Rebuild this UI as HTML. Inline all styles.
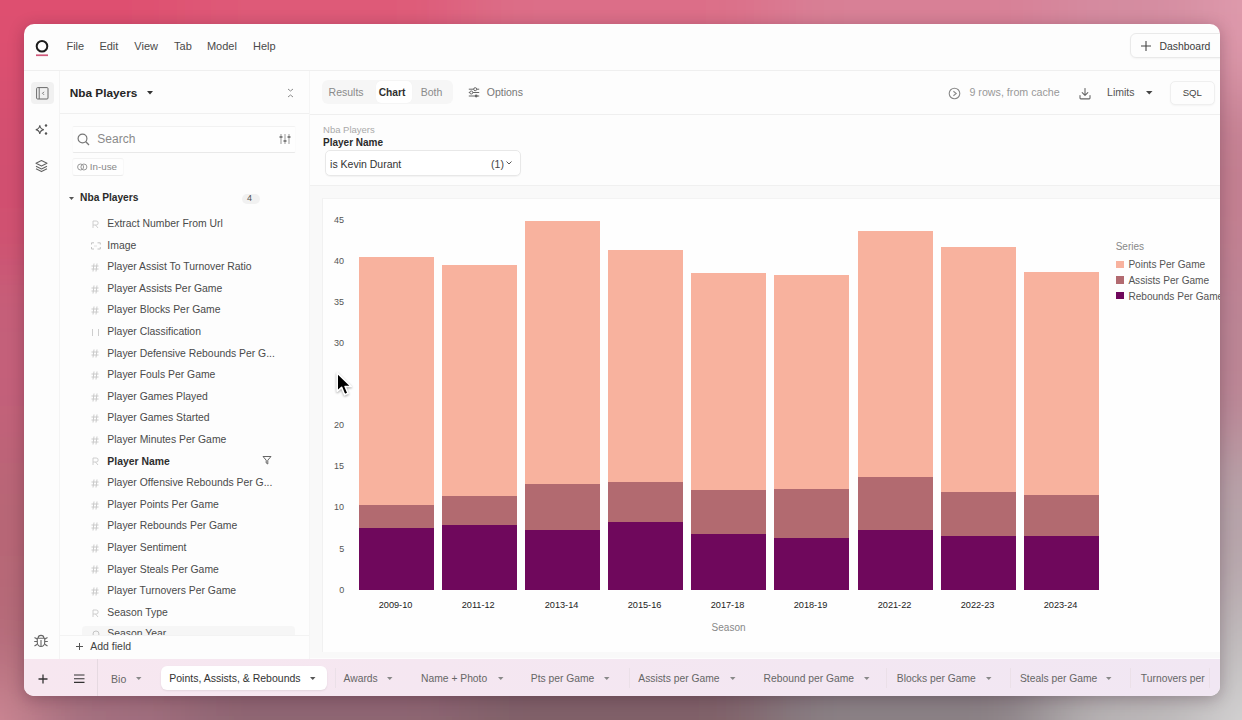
<!DOCTYPE html>
<html><head><meta charset="utf-8">
<style>
*{box-sizing:border-box;margin:0;padding:0}
html,body{width:1242px;height:720px;overflow:hidden}
body{font-family:"Liberation Sans",sans-serif;position:relative;
background:#c87080;}
.a{position:absolute}
.shadow{position:absolute;left:24px;top:24px;width:1196px;height:672px;border-radius:10px;box-shadow:0 3px 16px rgba(40,10,30,.28)}
.win{position:absolute;left:0;top:0;width:1242px;height:720px;clip-path:inset(24px 22px 24px 24px round 10px);background:#fdfdfd}
.t{position:absolute;white-space:nowrap;line-height:1}
</style></head><body>
<svg class="a" style="left:0;top:0" width="1242" height="720"><defs><filter id="bl" x="-600" y="-600" width="2442" height="1920" filterUnits="userSpaceOnUse"><feGaussianBlur stdDeviation="40"/></filter></defs><g filter="url(#bl)"><rect x="-600" y="-600" width="630.0" height="690.0" fill="#de5070"/><rect x="30.0" y="-600" width="155.0" height="690.0" fill="#de5070"/><rect x="185.0" y="-600" width="280.0" height="690.0" fill="#de5a78"/><rect x="465.0" y="-600" width="310.0" height="690.0" fill="#dc6e88"/><rect x="775.0" y="-600" width="280.0" height="690.0" fill="#d88096"/><rect x="1055.0" y="-600" width="156.0" height="690.0" fill="#d48ca0"/><rect x="1211.0" y="-600" width="631.0" height="690.0" fill="#e09cae"/><rect x="-600" y="90.0" width="630.0" height="180.0" fill="#d24f70"/><rect x="30.0" y="90.0" width="155.0" height="180.0" fill="#d05070"/><rect x="185.0" y="90.0" width="280.0" height="180.0" fill="#d06080"/><rect x="465.0" y="90.0" width="310.0" height="180.0" fill="#cc7088"/><rect x="775.0" y="90.0" width="280.0" height="180.0" fill="#c88090"/><rect x="1055.0" y="90.0" width="156.0" height="180.0" fill="#bd7a8c"/><rect x="1211.0" y="90.0" width="631.0" height="180.0" fill="#c48092"/><rect x="-600" y="270.0" width="630.0" height="180.0" fill="#c4607a"/><rect x="30.0" y="270.0" width="155.0" height="180.0" fill="#c2607a"/><rect x="185.0" y="270.0" width="280.0" height="180.0" fill="#bc6a80"/><rect x="465.0" y="270.0" width="310.0" height="180.0" fill="#b87080"/><rect x="775.0" y="270.0" width="280.0" height="180.0" fill="#b88090"/><rect x="1055.0" y="270.0" width="156.0" height="180.0" fill="#b68090"/><rect x="1211.0" y="270.0" width="631.0" height="180.0" fill="#bc8696"/><rect x="-600" y="450.0" width="630.0" height="150.0" fill="#b86676"/><rect x="30.0" y="450.0" width="155.0" height="150.0" fill="#b46676"/><rect x="185.0" y="450.0" width="280.0" height="150.0" fill="#a46878"/><rect x="465.0" y="450.0" width="310.0" height="150.0" fill="#986870"/><rect x="775.0" y="450.0" width="280.0" height="150.0" fill="#a08088"/><rect x="1055.0" y="450.0" width="156.0" height="150.0" fill="#b09ca4"/><rect x="1211.0" y="450.0" width="631.0" height="150.0" fill="#b8a6ab"/><rect x="-600" y="600.0" width="630.0" height="90.0" fill="#b86c7a"/><rect x="30.0" y="600.0" width="155.0" height="90.0" fill="#a66a78"/><rect x="185.0" y="600.0" width="280.0" height="90.0" fill="#946474"/><rect x="465.0" y="600.0" width="310.0" height="90.0" fill="#80606a"/><rect x="775.0" y="600.0" width="280.0" height="90.0" fill="#8a8086"/><rect x="1055.0" y="600.0" width="156.0" height="90.0" fill="#b0aaac"/><rect x="1211.0" y="600.0" width="631.0" height="90.0" fill="#c4c0c1"/><rect x="-600" y="690.0" width="630.0" height="630.0" fill="#d8909c"/><rect x="30.0" y="690.0" width="155.0" height="630.0" fill="#a07080"/><rect x="185.0" y="690.0" width="280.0" height="630.0" fill="#8c6672"/><rect x="465.0" y="690.0" width="310.0" height="630.0" fill="#806068"/><rect x="775.0" y="690.0" width="280.0" height="630.0" fill="#8a8084"/><rect x="1055.0" y="690.0" width="156.0" height="630.0" fill="#bcb8b9"/><rect x="1211.0" y="690.0" width="631.0" height="630.0" fill="#dcdcdc"/></g></svg><div class="shadow"></div>
<div class="win">
<svg class="a" style="left:34px;top:38px;" width="16" height="20" viewBox="0 0 16 20"><circle cx="8" cy="8.2" r="5.3" fill="none" stroke="#1c1c1c" stroke-width="2"/><rect x="2" y="16.4" width="12" height="1.7" fill="#d0587a"/></svg>
<div class="t" style="left:66.41px;top:40.89px;font-size:11px;color:#4a4a4a;font-weight:400;">File</div>
<div class="t" style="left:99.41px;top:40.89px;font-size:11px;color:#4a4a4a;font-weight:400;">Edit</div>
<div class="t" style="left:134.31px;top:40.89px;font-size:11px;color:#4a4a4a;font-weight:400;">View</div>
<div class="t" style="left:174.11px;top:40.89px;font-size:11px;color:#4a4a4a;font-weight:400;">Tab</div>
<div class="t" style="left:206.91px;top:40.89px;font-size:11px;color:#4a4a4a;font-weight:400;">Model</div>
<div class="t" style="left:253.01px;top:40.89px;font-size:11px;color:#4a4a4a;font-weight:400;">Help</div>
<div class="a" style="left:1130px;top:33px;width:100px;height:25px;border:1px solid #e9e9e9;border-radius:6px;background:#fdfdfd;box-shadow:0 1px 2px rgba(0,0,0,.04)"></div>
<svg class="a" style="left:1141px;top:40.5px;" width="10" height="10" viewBox="0 0 10 10"><path d="M5 0v10M0 5h10" stroke="#444" stroke-width="1.1"/></svg>
<div class="t" style="left:1159.56px;top:41.50px;font-size:10.4px;color:#3c3c3c;font-weight:400;">Dashboard</div>
<div class="a" style="left:24px;top:70px;width:1196px;height:1px;background:#efefef"></div>
<div class="a" style="left:59px;top:71px;width:1px;height:589px;background:#f4f4f4"></div>
<div class="a" style="left:31px;top:82px;width:22.5px;height:21.5px;background:#f1f1f1;border-radius:4px"></div>
<svg class="a" style="left:35.5px;top:86.5px;" width="13" height="13" viewBox="0 0 13 13"><rect x="0.6" y="0.6" width="11.4" height="11.4" rx="1" fill="none" stroke="#6a6a6a" stroke-width="1"/><path d="M3.2 0.6v11.4" stroke="#6a6a6a" stroke-width="1"/><path d="M8 4.8l-1.5 1.5 1.5 1.5" fill="none" stroke="#6a6a6a" stroke-width="0.9"/></svg>
<svg class="a" style="left:34px;top:122px;" width="16" height="16" viewBox="0 0 16 16"><path d="M5.8 3.2 Q6.3 7.1 9.8 7.6 Q6.3 8.1 5.8 12 Q5.3 8.1 1.8 7.6 Q5.3 7.1 5.8 3.2Z" fill="none" stroke="#555" stroke-width="1.1"/><circle cx="12" cy="3.5" r="1.2" fill="#555"/><circle cx="12" cy="11.5" r="1.2" fill="#555"/></svg>
<svg class="a" style="left:34.5px;top:159px;" width="14" height="14" viewBox="0 0 14 14"><path d="M6.5 1.5 L12 4.3 L6.5 7.1 L1 4.3Z" fill="none" stroke="#666" stroke-width="1.1" stroke-linejoin="round"/><path d="M1 7.2 L6.5 10 L12 7.2" fill="none" stroke="#666" stroke-width="1.1" stroke-linejoin="round"/><path d="M1 9.8 L6.5 12.6 L12 9.8" fill="none" stroke="#666" stroke-width="1.1" stroke-linejoin="round"/></svg>
<svg class="a" style="left:33px;top:633px;" width="16" height="16" viewBox="0 0 16 16"><path d="M5.2 5 a2.8 2.6 0 0 1 5.6 0" fill="none" stroke="#666" stroke-width="1.1"/><path d="M4.3 5.3h7.4v4.2a3.7 4 0 0 1-7.4 0Z" fill="none" stroke="#666" stroke-width="1.1"/><path d="M8 7v6M1.5 4.5l2.6 1.5M14.5 4.5l-2.6 1.5M1.2 8.5h3M14.8 8.5h-3M1.5 13l2.7-1.8M14.5 13l-2.7-1.8" fill="none" stroke="#666" stroke-width="1.1"/></svg>
<div class="t" style="left:69.74px;top:87.91px;font-size:11.8px;color:#242424;font-weight:700;">Nba Players</div>
<svg class="a" style="left:147px;top:91px;" width="6" height="4" viewBox="0 0 6 4"><path d="M0 0h6L3 3.5Z" fill="#333"/></svg>
<svg class="a" style="left:287px;top:87.5px;" width="7" height="10" viewBox="0 0 7 10"><path d="M1 1 L3.5 3 L6 1" fill="none" stroke="#8a8a8a" stroke-width="1"/><path d="M1 9 L3.5 7 L6 9" fill="none" stroke="#8a8a8a" stroke-width="1"/></svg>
<div class="a" style="left:60px;top:113px;width:250px;height:1px;background:#f0f0f0"></div>
<div class="a" style="left:71.5px;top:125.5px;width:224.5px;height:27px;border:1px solid #fbfbfb;border-top-color:#f2f2f2;border-bottom-color:#e9e9e9;border-radius:2px;background:#fefefe"></div>
<svg class="a" style="left:77px;top:133px;" width="14" height="13" viewBox="0 0 14 13"><circle cx="5.5" cy="5.5" r="4.4" fill="none" stroke="#777" stroke-width="1.2"/><path d="M8.8 8.8 L12 12" stroke="#777" stroke-width="1.3"/></svg>
<div class="t" style="left:97.32px;top:133.44px;font-size:12px;color:#8a8a8a;font-weight:400;">Search</div>
<svg class="a" style="left:279px;top:134px;" width="12" height="10" viewBox="0 0 12 10"><path d="M2 0v10M6 0v10M10 0v10" stroke="#999" stroke-width="1"/><path d="M0.5 3h3M4.5 7h3M8.5 3h3" stroke="#666" stroke-width="1.6"/></svg>
<div class="a" style="left:71.5px;top:157.7px;width:52.5px;height:18.7px;border:1px solid #f8f8f8;border-top-color:#f2f2f2;border-bottom-color:#ececec;border-radius:3px;background:#fefefe"></div>
<svg class="a" style="left:77px;top:163px;" width="11" height="8" viewBox="0 0 11 8"><ellipse cx="3.6" cy="4" rx="3" ry="3" fill="none" stroke="#999" stroke-width="1"/><ellipse cx="6.9" cy="4" rx="3" ry="3" fill="none" stroke="#999" stroke-width="1"/></svg>
<div class="t" style="left:89.82px;top:162.30px;font-size:9.8px;color:#888;font-weight:400;">In-use</div>
<svg class="a" style="left:69px;top:197px;" width="6" height="4" viewBox="0 0 6 4"><path d="M0 0h5L2.5 3Z" fill="#555"/></svg>
<div class="t" style="left:80.08px;top:193.47px;font-size:10.2px;color:#2a2a2a;font-weight:700;">Nba Players</div>
<div class="a" style="left:241.5px;top:193.8px;width:18px;height:10px;background:#f1f1f1;border-radius:5px"></div>
<div class="t" style="left:246.99px;top:194.48px;font-size:9px;color:#505050;font-weight:400;">4</div>
<div class="a" style="left:82px;top:626px;width:212.5px;height:12px;background:#f6f6f6;border-radius:4px"></div>
<svg class="a" style="left:92px;top:219.7px;" width="7" height="8.5" viewBox="0 0 7 8.5"><path d="M1 8V1h3.2a2 2 0 010 4H1M3.5 5L6 8" stroke="#c8c8c8" stroke-width="0.9" fill="none"/></svg>
<div class="t" style="left:107.36px;top:218.90px;font-size:10.4px;color:#4a4a4a;font-weight:400;">Extract Number From Url</div>
<svg class="a" style="left:90.5px;top:241.79999999999998px;" width="10" height="8" viewBox="0 0 10 8"><path d="M0.5 2.5V0.8h2.5M6.5 0.8h2.8v1.7M0.5 5v2h2.5M6.5 7h2.8V5" stroke="#c4c4c4" stroke-width="1" fill="none"/><path d="M3 4h3" stroke="#d8d8d8" stroke-width="0.8"/></svg>
<div class="t" style="left:107.36px;top:240.50px;font-size:10.4px;color:#4a4a4a;font-weight:400;">Image</div>
<svg class="a" style="left:91px;top:262.9px;" width="8" height="9" viewBox="0 0 8 9"><path d="M3 0.5 L2 8.5M6 0.5 L5 8.5M0.5 3h7M0.5 6h7" stroke="#c6c6c6" stroke-width="0.9" fill="none"/></svg>
<div class="t" style="left:107.36px;top:262.10px;font-size:10.4px;color:#4a4a4a;font-weight:400;">Player Assist To Turnover Ratio</div>
<svg class="a" style="left:91px;top:284.5px;" width="8" height="9" viewBox="0 0 8 9"><path d="M3 0.5 L2 8.5M6 0.5 L5 8.5M0.5 3h7M0.5 6h7" stroke="#c6c6c6" stroke-width="0.9" fill="none"/></svg>
<div class="t" style="left:107.36px;top:283.70px;font-size:10.4px;color:#4a4a4a;font-weight:400;">Player Assists Per Game</div>
<svg class="a" style="left:91px;top:306.1px;" width="8" height="9" viewBox="0 0 8 9"><path d="M3 0.5 L2 8.5M6 0.5 L5 8.5M0.5 3h7M0.5 6h7" stroke="#c6c6c6" stroke-width="0.9" fill="none"/></svg>
<div class="t" style="left:107.36px;top:305.30px;font-size:10.4px;color:#4a4a4a;font-weight:400;">Player Blocks Per Game</div>
<svg class="a" style="left:91px;top:327.7px;" width="9" height="8" viewBox="0 0 9 8"><path d="M1.5 1v7M7.5 1v7" stroke="#c8c8c8" stroke-width="0.9" fill="none"/></svg>
<div class="t" style="left:107.36px;top:326.90px;font-size:10.4px;color:#4a4a4a;font-weight:400;">Player Classification</div>
<svg class="a" style="left:91px;top:349.3px;" width="8" height="9" viewBox="0 0 8 9"><path d="M3 0.5 L2 8.5M6 0.5 L5 8.5M0.5 3h7M0.5 6h7" stroke="#c6c6c6" stroke-width="0.9" fill="none"/></svg>
<div class="t" style="left:107.36px;top:348.50px;font-size:10.4px;color:#4a4a4a;font-weight:400;">Player Defensive Rebounds Per G...</div>
<svg class="a" style="left:91px;top:370.9px;" width="8" height="9" viewBox="0 0 8 9"><path d="M3 0.5 L2 8.5M6 0.5 L5 8.5M0.5 3h7M0.5 6h7" stroke="#c6c6c6" stroke-width="0.9" fill="none"/></svg>
<div class="t" style="left:107.36px;top:370.10px;font-size:10.4px;color:#4a4a4a;font-weight:400;">Player Fouls Per Game</div>
<svg class="a" style="left:91px;top:392.5px;" width="8" height="9" viewBox="0 0 8 9"><path d="M3 0.5 L2 8.5M6 0.5 L5 8.5M0.5 3h7M0.5 6h7" stroke="#c6c6c6" stroke-width="0.9" fill="none"/></svg>
<div class="t" style="left:107.36px;top:391.70px;font-size:10.4px;color:#4a4a4a;font-weight:400;">Player Games Played</div>
<svg class="a" style="left:91px;top:414.1px;" width="8" height="9" viewBox="0 0 8 9"><path d="M3 0.5 L2 8.5M6 0.5 L5 8.5M0.5 3h7M0.5 6h7" stroke="#c6c6c6" stroke-width="0.9" fill="none"/></svg>
<div class="t" style="left:107.36px;top:413.30px;font-size:10.4px;color:#4a4a4a;font-weight:400;">Player Games Started</div>
<svg class="a" style="left:91px;top:435.7px;" width="8" height="9" viewBox="0 0 8 9"><path d="M3 0.5 L2 8.5M6 0.5 L5 8.5M0.5 3h7M0.5 6h7" stroke="#c6c6c6" stroke-width="0.9" fill="none"/></svg>
<div class="t" style="left:107.36px;top:434.90px;font-size:10.4px;color:#4a4a4a;font-weight:400;">Player Minutes Per Game</div>
<svg class="a" style="left:92px;top:457.3px;" width="7" height="8.5" viewBox="0 0 7 8.5"><path d="M1 8V1h3.2a2 2 0 010 4H1M3.5 5L6 8" stroke="#c8c8c8" stroke-width="0.9" fill="none"/></svg>
<div class="t" style="left:107.36px;top:456.50px;font-size:10.4px;color:#2e2e2e;font-weight:700;">Player Name</div>
<svg class="a" style="left:91px;top:478.90000000000003px;" width="8" height="9" viewBox="0 0 8 9"><path d="M3 0.5 L2 8.5M6 0.5 L5 8.5M0.5 3h7M0.5 6h7" stroke="#c6c6c6" stroke-width="0.9" fill="none"/></svg>
<div class="t" style="left:107.36px;top:478.10px;font-size:10.4px;color:#4a4a4a;font-weight:400;">Player Offensive Rebounds Per G...</div>
<svg class="a" style="left:91px;top:500.5px;" width="8" height="9" viewBox="0 0 8 9"><path d="M3 0.5 L2 8.5M6 0.5 L5 8.5M0.5 3h7M0.5 6h7" stroke="#c6c6c6" stroke-width="0.9" fill="none"/></svg>
<div class="t" style="left:107.36px;top:499.70px;font-size:10.4px;color:#4a4a4a;font-weight:400;">Player Points Per Game</div>
<svg class="a" style="left:91px;top:522.1px;" width="8" height="9" viewBox="0 0 8 9"><path d="M3 0.5 L2 8.5M6 0.5 L5 8.5M0.5 3h7M0.5 6h7" stroke="#c6c6c6" stroke-width="0.9" fill="none"/></svg>
<div class="t" style="left:107.36px;top:521.30px;font-size:10.4px;color:#4a4a4a;font-weight:400;">Player Rebounds Per Game</div>
<svg class="a" style="left:91px;top:543.7px;" width="8" height="9" viewBox="0 0 8 9"><path d="M3 0.5 L2 8.5M6 0.5 L5 8.5M0.5 3h7M0.5 6h7" stroke="#c6c6c6" stroke-width="0.9" fill="none"/></svg>
<div class="t" style="left:107.36px;top:542.90px;font-size:10.4px;color:#4a4a4a;font-weight:400;">Player Sentiment</div>
<svg class="a" style="left:91px;top:565.3px;" width="8" height="9" viewBox="0 0 8 9"><path d="M3 0.5 L2 8.5M6 0.5 L5 8.5M0.5 3h7M0.5 6h7" stroke="#c6c6c6" stroke-width="0.9" fill="none"/></svg>
<div class="t" style="left:107.36px;top:564.50px;font-size:10.4px;color:#4a4a4a;font-weight:400;">Player Steals Per Game</div>
<svg class="a" style="left:91px;top:586.9000000000001px;" width="8" height="9" viewBox="0 0 8 9"><path d="M3 0.5 L2 8.5M6 0.5 L5 8.5M0.5 3h7M0.5 6h7" stroke="#c6c6c6" stroke-width="0.9" fill="none"/></svg>
<div class="t" style="left:107.36px;top:586.10px;font-size:10.4px;color:#4a4a4a;font-weight:400;">Player Turnovers Per Game</div>
<svg class="a" style="left:92px;top:608.5px;" width="7" height="8.5" viewBox="0 0 7 8.5"><path d="M1 8V1h3.2a2 2 0 010 4H1M3.5 5L6 8" stroke="#c8c8c8" stroke-width="0.9" fill="none"/></svg>
<div class="t" style="left:107.36px;top:607.70px;font-size:10.4px;color:#4a4a4a;font-weight:400;">Season Type</div>
<svg class="a" style="left:92px;top:630.1px;" width="8" height="8" viewBox="0 0 8 8"><circle cx="4" cy="4" r="3" stroke="#c0c0c0" stroke-width="0.9" fill="none"/></svg>
<div class="t" style="left:107.36px;top:629.30px;font-size:10.4px;color:#4a4a4a;font-weight:400;">Season Year</div>
<svg class="a" style="left:262px;top:455px;" width="10" height="10" viewBox="0 0 10 10"><path d="M1 1.5h8L5.8 5.2V9L4.2 8V5.2Z" fill="none" stroke="#666" stroke-width="1"/></svg>
<div class="a" style="left:60px;top:635px;width:250px;height:24px;background:#fdfdfd;border-top:1px solid #f3f3f3"></div>
<svg class="a" style="left:75.5px;top:643px;" width="7" height="7" viewBox="0 0 7 7"><path d="M3.5 0v7M0 3.5h7" stroke="#555" stroke-width="1"/></svg>
<div class="t" style="left:90.26px;top:641.41px;font-size:10.5px;color:#444;font-weight:400;">Add field</div>
<div class="a" style="left:309px;top:71px;width:1px;height:588px;background:#f5f5f5"></div>
<div class="a" style="left:322px;top:80.4px;width:131px;height:24px;background:#f6f6f6;border-radius:6px"></div>
<div class="a" style="left:376px;top:81.3px;width:35.5px;height:22.2px;background:#fff;border-radius:5px;box-shadow:0 0 1px rgba(0,0,0,.05)"></div>
<div class="t" style="left:328.56px;top:87.11px;font-size:10.5px;color:#8a8a8a;font-weight:400;">Results</div>
<div class="t" style="left:378.78px;top:87.97px;font-size:10.2px;color:#2e2e2e;font-weight:700;">Chart</div>
<div class="t" style="left:420.66px;top:87.11px;font-size:10.5px;color:#8a8a8a;font-weight:400;">Both</div>
<svg class="a" style="left:468px;top:87px;" width="12" height="11" viewBox="0 0 12 11"><path d="M0.8 2.2h10.4M0.8 5.5h10.4M0.8 9h10.4" stroke="#666" stroke-width="1"/><circle cx="7.2" cy="2.2" r="1.5" fill="#fff" stroke="#666" stroke-width="1"/><circle cx="3.3" cy="5.5" r="1.5" fill="#fff" stroke="#666" stroke-width="1"/><circle cx="8.2" cy="9" r="1.4" fill="#666"/></svg>
<div class="t" style="left:486.75px;top:87.11px;font-size:10.5px;color:#777;font-weight:400;">Options</div>
<svg class="a" style="left:947.5px;top:87px;" width="13" height="13" viewBox="0 0 13 13"><circle cx="6.5" cy="6.5" r="5.3" fill="none" stroke="#8a8a8a" stroke-width="1.1"/><path d="M5.4 4.3 L8.2 6.5 L5.4 8.7" fill="none" stroke="#8a8a8a" stroke-width="1.1"/></svg>
<div class="t" style="left:969.44px;top:86.74px;font-size:10.7px;color:#999;font-weight:400;">9 rows, from cache</div>
<svg class="a" style="left:1078.5px;top:87.5px;" width="12" height="12" viewBox="0 0 12 12"><path d="M6 0.5v6.8M3.2 4.6 L6 7.4 L8.8 4.6M1 7.5v2.6a0.8 0.8 0 0 0 0.8 0.8h8.4a0.8 0.8 0 0 0 0.8-0.8V7.5" fill="none" stroke="#666" stroke-width="1.1" stroke-linecap="round" stroke-linejoin="round"/></svg>
<div class="t" style="left:1107.06px;top:86.91px;font-size:10.5px;color:#555;font-weight:400;">Limits</div>
<svg class="a" style="left:1146px;top:91px;" width="7" height="4" viewBox="0 0 7 4"><path d="M0 0h6.5L3.25 3.5Z" fill="#444"/></svg>
<div class="a" style="left:1169.5px;top:80.5px;width:45px;height:24.8px;border:1px solid #efefef;border-radius:5px;background:#fdfdfd;box-shadow:0 1px 2px rgba(0,0,0,.04)"></div>
<div class="t" style="left:1182.64px;top:87.87px;font-size:9.6px;color:#444;font-weight:400;">SQL</div>
<div class="a" style="left:310px;top:113.5px;width:910px;height:1px;background:#efefef"></div>
<div class="t" style="left:323.04px;top:124.96px;font-size:9.5px;color:#aaa;font-weight:400;">Nba Players</div>
<div class="t" style="left:323.00px;top:137.73px;font-size:10px;color:#2a2a2a;font-weight:700;">Player Name</div>
<div class="a" style="left:324.7px;top:150.4px;width:196px;height:26px;border:1px solid #e8e8e8;border-radius:5px;background:#fff;box-shadow:0 1px 1px rgba(0,0,0,.04)"></div>
<div class="t" style="left:330.06px;top:158.91px;font-size:10.5px;color:#333;font-weight:400;">is Kevin Durant</div>
<div class="t" style="left:491.06px;top:158.91px;font-size:10.5px;color:#444;font-weight:400;">(1)</div>
<svg class="a" style="left:506px;top:161px;" width="6" height="4" viewBox="0 0 6 4"><path d="M0.5 0.5 L3 3 L5.5 0.5" fill="none" stroke="#555" stroke-width="1"/></svg>
<div class="a" style="left:310px;top:185px;width:910px;height:473px;background:#f9f9f9;border-top:1px solid #f0f0f0"></div>
<div class="a" style="left:322px;top:198px;width:898px;height:454px;background:#fefefe;border-left:1px solid #f1f1f1;border-top:1px solid #f3f3f3"></div>
<div class="t" style="left:339.19px;top:585.68px;font-size:9px;color:#555;font-weight:400;">0</div>
<div class="t" style="left:339.19px;top:544.58px;font-size:9px;color:#555;font-weight:400;">5</div>
<div class="t" style="left:333.99px;top:503.48px;font-size:9px;color:#555;font-weight:400;">10</div>
<div class="t" style="left:333.99px;top:462.38px;font-size:9px;color:#555;font-weight:400;">15</div>
<div class="t" style="left:333.99px;top:421.28px;font-size:9px;color:#555;font-weight:400;">20</div>
<div class="t" style="left:333.99px;top:339.08px;font-size:9px;color:#555;font-weight:400;">30</div>
<div class="t" style="left:333.99px;top:297.98px;font-size:9px;color:#555;font-weight:400;">35</div>
<div class="t" style="left:333.99px;top:256.88px;font-size:9px;color:#555;font-weight:400;">40</div>
<div class="t" style="left:333.99px;top:215.78px;font-size:9px;color:#555;font-weight:400;">45</div>
<div class="a" style="left:359px;top:257px;width:75px;height:333px;background:#f8b29e"></div>
<div class="a" style="left:359px;top:505px;width:75px;height:85px;background:#b26a70"></div>
<div class="a" style="left:359px;top:528px;width:75px;height:62px;background:#6f085c"></div>
<div class="t" style="left:378.67px;top:600.71px;font-size:9.2px;color:#222;font-weight:400;">2009-10</div>
<div class="a" style="left:442px;top:265px;width:75px;height:325px;background:#f8b29e"></div>
<div class="a" style="left:442px;top:496px;width:75px;height:94px;background:#b26a70"></div>
<div class="a" style="left:442px;top:525px;width:75px;height:65px;background:#6f085c"></div>
<div class="t" style="left:461.67px;top:600.71px;font-size:9.2px;color:#222;font-weight:400;">2011-12</div>
<div class="a" style="left:525px;top:221px;width:75px;height:369px;background:#f8b29e"></div>
<div class="a" style="left:525px;top:484px;width:75px;height:106px;background:#b26a70"></div>
<div class="a" style="left:525px;top:530px;width:75px;height:60px;background:#6f085c"></div>
<div class="t" style="left:544.67px;top:600.71px;font-size:9.2px;color:#222;font-weight:400;">2013-14</div>
<div class="a" style="left:608px;top:250px;width:75px;height:340px;background:#f8b29e"></div>
<div class="a" style="left:608px;top:482px;width:75px;height:108px;background:#b26a70"></div>
<div class="a" style="left:608px;top:522px;width:75px;height:68px;background:#6f085c"></div>
<div class="t" style="left:627.67px;top:600.71px;font-size:9.2px;color:#222;font-weight:400;">2015-16</div>
<div class="a" style="left:691px;top:273px;width:75px;height:317px;background:#f8b29e"></div>
<div class="a" style="left:691px;top:490px;width:75px;height:100px;background:#b26a70"></div>
<div class="a" style="left:691px;top:534px;width:75px;height:56px;background:#6f085c"></div>
<div class="t" style="left:710.67px;top:600.71px;font-size:9.2px;color:#222;font-weight:400;">2017-18</div>
<div class="a" style="left:774px;top:275px;width:75px;height:315px;background:#f8b29e"></div>
<div class="a" style="left:774px;top:489px;width:75px;height:101px;background:#b26a70"></div>
<div class="a" style="left:774px;top:538px;width:75px;height:52px;background:#6f085c"></div>
<div class="t" style="left:793.67px;top:600.71px;font-size:9.2px;color:#222;font-weight:400;">2018-19</div>
<div class="a" style="left:858px;top:231px;width:75px;height:359px;background:#f8b29e"></div>
<div class="a" style="left:858px;top:477px;width:75px;height:113px;background:#b26a70"></div>
<div class="a" style="left:858px;top:530px;width:75px;height:60px;background:#6f085c"></div>
<div class="t" style="left:877.67px;top:600.71px;font-size:9.2px;color:#222;font-weight:400;">2021-22</div>
<div class="a" style="left:941px;top:247px;width:75px;height:343px;background:#f8b29e"></div>
<div class="a" style="left:941px;top:492px;width:75px;height:98px;background:#b26a70"></div>
<div class="a" style="left:941px;top:536px;width:75px;height:54px;background:#6f085c"></div>
<div class="t" style="left:960.67px;top:600.71px;font-size:9.2px;color:#222;font-weight:400;">2022-23</div>
<div class="a" style="left:1024px;top:272px;width:75px;height:318px;background:#f8b29e"></div>
<div class="a" style="left:1024px;top:495px;width:75px;height:95px;background:#b26a70"></div>
<div class="a" style="left:1024px;top:536px;width:75px;height:54px;background:#6f085c"></div>
<div class="t" style="left:1043.67px;top:600.71px;font-size:9.2px;color:#222;font-weight:400;">2023-24</div>
<div class="t" style="left:711.60px;top:622.83px;font-size:10px;color:#888;font-weight:400;">Season</div>
<div class="t" style="left:1115.70px;top:242.13px;font-size:10px;color:#888;font-weight:400;">Series</div>
<div class="a" style="left:1116.4px;top:260.5px;width:7.8px;height:7.8px;background:#f8b29e"></div>
<div class="t" style="left:1128.39px;top:260.35px;font-size:10.1px;color:#555;font-weight:400;">Points Per Game</div>
<div class="a" style="left:1116.4px;top:276.1px;width:7.8px;height:7.8px;background:#b26a70"></div>
<div class="t" style="left:1128.39px;top:275.95px;font-size:10.1px;color:#555;font-weight:400;">Assists Per Game</div>
<div class="a" style="left:1116.4px;top:291.7px;width:7.8px;height:7.8px;background:#6f085c"></div>
<div class="t" style="left:1128.39px;top:291.55px;font-size:10.1px;color:#555;font-weight:400;">Rebounds Per Game</div>
<svg class="a" style="left:334.4px;top:370px;filter:drop-shadow(0 1px 1.2px rgba(0,0,0,.35))" width="24" height="28" viewBox="0 0 24 28"><path d="M3.2 2.9 L3.2 21.3 L7.6 17.4 L10.6 24.8 L14.0 23.3 L11.1 16.5 L17.2 16.5 Z" fill="#000" stroke="#fff" stroke-width="1.6" stroke-linejoin="round"/></svg>
<div class="a" style="left:24px;top:659px;width:1196px;height:37px;background:linear-gradient(to right,#f7e7f0,#f1e7f3)"></div>
<svg class="a" style="left:37.5px;top:673.5px;" width="10" height="10" viewBox="0 0 10 10"><path d="M5 0.5v9M0.5 5h9" stroke="#333" stroke-width="1.3"/></svg>
<svg class="a" style="left:73.5px;top:673.5px;" width="11" height="10" viewBox="0 0 11 10"><path d="M0 1h10.5M0 4.7h10.5M0 8.4h10.5" stroke="#333" stroke-width="1.15"/></svg>
<div class="a" style="left:97px;top:659px;width:1px;height:37px;background:#e6d9e1"></div>
<div class="t" style="left:111.06px;top:673.61px;font-size:10.5px;color:#666;font-weight:400;">Bio</div>
<svg class="a" style="left:135.5px;top:677px;" width="6" height="4" viewBox="0 0 6 4"><path d="M0 0h5.5L2.75 3Z" fill="#888"/></svg>
<div class="a" style="left:161px;top:666.2px;width:165.5px;height:24.3px;background:#fff;border-radius:6px;box-shadow:0 1px 2px rgba(0,0,0,.08)"></div>
<div class="t" style="left:169.25px;top:673.11px;font-size:10.5px;color:#333;font-weight:400;">Points, Assists, & Rebounds</div>
<svg class="a" style="left:310px;top:677px;" width="6" height="4" viewBox="0 0 6 4"><path d="M0 0h5.5L2.75 3Z" fill="#555"/></svg>
<div class="t" style="left:343.57px;top:673.98px;font-size:10.3px;color:#666;font-weight:400;">Awards</div>
<svg class="a" style="left:387px;top:677px;" width="6" height="4" viewBox="0 0 6 4"><path d="M0 0h5.5L2.75 3Z" fill="#888"/></svg>
<div class="t" style="left:421.07px;top:673.98px;font-size:10.3px;color:#666;font-weight:400;">Name + Photo</div>
<svg class="a" style="left:497.7px;top:677px;" width="6" height="4" viewBox="0 0 6 4"><path d="M0 0h5.5L2.75 3Z" fill="#888"/></svg>
<div class="t" style="left:530.77px;top:673.98px;font-size:10.3px;color:#666;font-weight:400;">Pts per Game</div>
<svg class="a" style="left:604px;top:677px;" width="6" height="4" viewBox="0 0 6 4"><path d="M0 0h5.5L2.75 3Z" fill="#888"/></svg>
<div class="t" style="left:638.27px;top:673.98px;font-size:10.3px;color:#666;font-weight:400;">Assists per Game</div>
<svg class="a" style="left:729.5px;top:677px;" width="6" height="4" viewBox="0 0 6 4"><path d="M0 0h5.5L2.75 3Z" fill="#888"/></svg>
<div class="t" style="left:763.57px;top:673.98px;font-size:10.3px;color:#666;font-weight:400;">Rebound per Game</div>
<svg class="a" style="left:863.7px;top:677px;" width="6" height="4" viewBox="0 0 6 4"><path d="M0 0h5.5L2.75 3Z" fill="#888"/></svg>
<div class="t" style="left:896.77px;top:673.98px;font-size:10.3px;color:#666;font-weight:400;">Blocks per Game</div>
<svg class="a" style="left:985.8px;top:677px;" width="6" height="4" viewBox="0 0 6 4"><path d="M0 0h5.5L2.75 3Z" fill="#888"/></svg>
<div class="t" style="left:1019.97px;top:673.98px;font-size:10.3px;color:#666;font-weight:400;">Steals per Game</div>
<svg class="a" style="left:1106px;top:677px;" width="6" height="4" viewBox="0 0 6 4"><path d="M0 0h5.5L2.75 3Z" fill="#888"/></svg>
<div class="t" style="left:1140.87px;top:673.98px;font-size:10.3px;color:#666;font-weight:400;">Turnovers per</div>
<div class="a" style="left:334.5px;top:668px;width:1px;height:20px;background:#ebe0e8"></div>
<div class="a" style="left:629px;top:668px;width:1px;height:20px;background:#ebe0e8"></div>
<div class="a" style="left:886px;top:668px;width:1px;height:20px;background:#ebe0e8"></div>
<div class="a" style="left:1009.6px;top:668px;width:1px;height:20px;background:#ebe0e8"></div>
<div class="a" style="left:1129.5px;top:668px;width:1px;height:20px;background:#ebe0e8"></div>
<div class="a" style="left:1209px;top:668px;width:1px;height:20px;background:#ebe0e8"></div>
</div>
</body></html>
